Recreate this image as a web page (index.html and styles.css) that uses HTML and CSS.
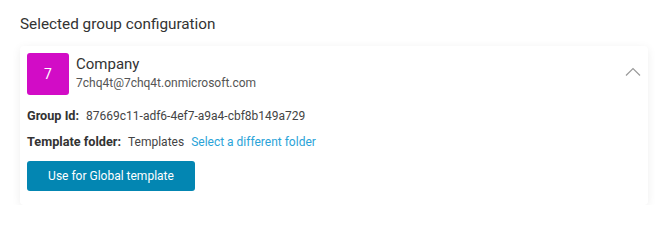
FILE: index.html
```html
<!DOCTYPE html>
<html>
<head>
<meta charset="utf-8">
<link rel="stylesheet" href="styles.css">
</head>
<body>
<div class="page">
  <h2 class="title">Selected group configuration</h2>
  <div class="card">
    <div class="header">
      <div class="avatar">7</div>
      <div class="info">
        <div class="name">Company</div>
        <div class="email">7chq4t@7chq4t.onmicrosoft.com</div>
      </div>
      <svg class="chevron" width="16" height="10" viewBox="0 0 16 10"><path d="M1 8.5 L8 1.5 L15 8.5" fill="none" stroke="#9a9a9a" stroke-width="1.2"/></svg>
    </div>
    <div class="row"><span class="label">Group Id:</span><span class="value">87669c11-adf6-4ef7-a9a4-cbf8b149a729</span></div>
    <div class="row"><span class="label">Template folder:</span><span class="value">Templates</span><a class="link">Select a different folder</a></div>
    <button class="btn">Use for Global template</button>
  </div>
</div>
</body>
</html>
```
FILE: styles.css
```css
html, body { margin: 0; padding: 0; background: #fff; }
body { font-family: "Roboto", sans-serif; color: #333; }
.page { padding: 12px 22px 0 20px; }
.title { margin: 0 0 10px 0; font-size: 15.3px; font-weight: 400; line-height: 24px; color: #333; }
.card {
  background: #fff;
  border-radius: 4px;
  box-shadow: 0 2px 10px rgba(0,0,0,0.07);
  padding: 7px 7px 14px 7px;
  display: flex; flex-direction: column; align-items: flex-start;
}
.header { display: flex; align-items: flex-start; width: 100%; }
.avatar {
  width: 42px; height: 42px; border-radius: 3px;
  background: #d20cc6; color: #fff;
  display: flex; align-items: center; justify-content: center;
  font-size: 14px;
}
.info { margin-left: 7px; flex: 1; }
.name { font-size: 15px; line-height: 20px; margin-top: 1px; color: #333; }
.email { font-size: 12px; line-height: 18px; color: #555; }
.chevron { margin-top: 14px; margin-right: 0px; }
.row { font-size: 12px; line-height: 18px; margin-top: 0; display: flex; align-items: baseline; }
.header + .row { margin-top: 12px; }
.row + .row { margin-top: 8px; }
.label { font-size: 12.7px; font-weight: 700; color: #333; margin-right: 7px; }
.value { color: #444; margin-right: 7px; }
.link { color: #2aa3d8; }
.btn {
  margin-top: 10px;
  font-family: "Roboto", sans-serif;
  font-size: 12px; color: #fff;
  background: #0386b2; border: none; border-radius: 3px;
  width: 168px; height: 30px; padding: 0;
}
```
